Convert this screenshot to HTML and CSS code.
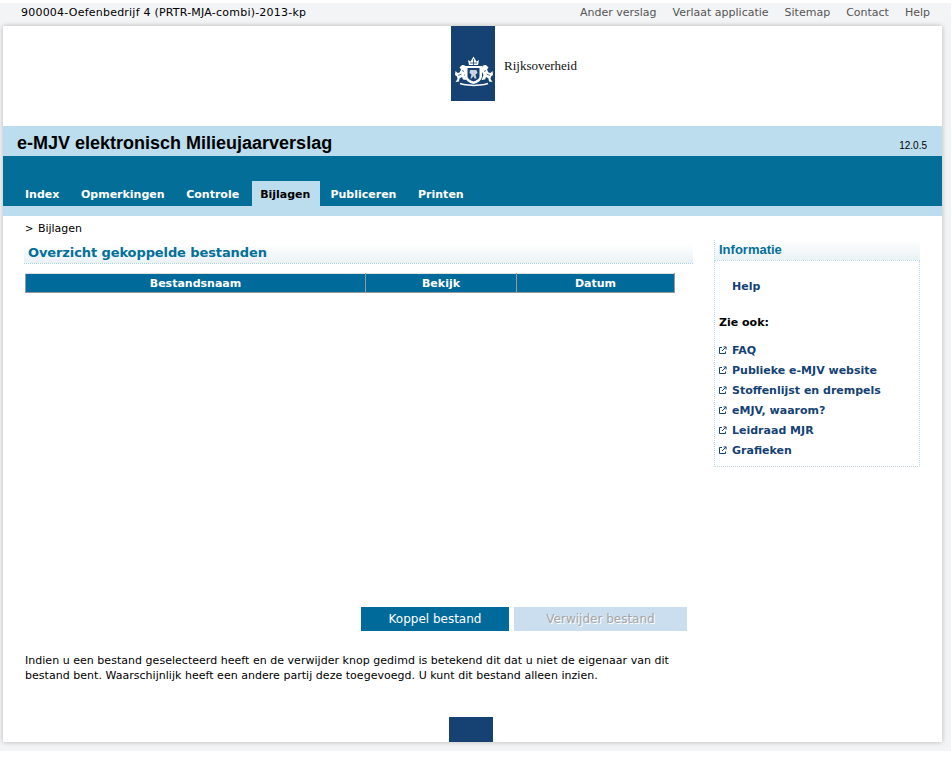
FILE: index.html
```html
<!DOCTYPE html>
<html lang="en">
<head>
  <meta charset="UTF-8">
  <meta name="viewport" content="width=device-width, initial-scale=1.0">
  <title>e-MJV elektronisch Milieujaarverslag</title>
  <link rel="stylesheet" href="styles.css">
</head>
<body>
  <div class="shell">
    <div class="topbar">
      <span class="company">900004-Oefenbedrijf 4 (PRTR-MJA-combi)-2013-kp</span>
      <ul class="toplinks">
        <li>Ander verslag</li>
        <li>Verlaat applicatie</li>
        <li>Sitemap</li>
        <li>Contact</li>
        <li>Help</li>
      </ul>
    </div>

    <div class="page">
      <div class="brand">
        <div class="logo">
          <svg class="crest" viewBox="0 0 44 45" width="44" height="45" aria-hidden="true">
            <!-- crown -->
            <path fill="#fff" d="M18 15 17 10 19.500 11.500 22.500 6.500 25.500 11.500 28 10 27 15Z"/>
            <path fill="none" stroke="#154273" stroke-width=".8" d="M19 13H26M22.500 9V15"/>
            <!-- shield with mantle -->
            <path fill="#fff" d="M14 16H31V26C31 30 27 33 22.500 34 18 33 14 30 14 26Z"/>
            <path fill="#154273" d="M16.500 18H28.500V26C28.500 29 25.500 30.500 22.500 31.500 19.500 30.500 16.500 29 16.500 26Z"/>
            <path fill="#c9d4e2" d="M19 20H25.500L26.500 23 24.500 24.500 25.500 28.500H23.500L22.500 26 20.500 28.500H19.500L20.500 24.500 18.500 23Z"/>
            <!-- lions -->
            <path fill="#fff" d="M10.500 15.500C12.500 14.500 15 15.500 15 18V22L13.500 25 15.500 30 12 29.500 11 27 8.500 28.500 8 31.500 4.500 32 6.500 29 6 26.500 4 25 4.500 21 6.500 23 8.500 22.500 10 19.500 8.500 17.500Z"/>
            <path fill="none" stroke="#154273" stroke-width=".7" d="M7 25.500 10.500 24M11 20.500 13 21.500"/>
            <g transform="matrix(-1 0 0 1 46 0)">
              <path fill="#fff" d="M10.500 15.500C12.500 14.500 15 15.500 15 18V22L13.500 25 15.500 30 12 29.500 11 27 8.500 28.500 8 31.500 4.500 32 6.500 29 6 26.500 4 25 4.500 21 6.500 23 8.500 22.500 10 19.500 8.500 17.500Z"/>
              <path fill="none" stroke="#154273" stroke-width=".7" d="M7 25.500 10.500 24M11 20.500 13 21.500"/>
            </g>
            <!-- motto ribbon -->
            <path fill="none" stroke="#fff" stroke-width="1.600" d="M9 33.500C14 35.500 18 34.500 23 35.500 28 34.500 32 35.500 37 33.500"/>
          </svg>
        </div>
        <span class="wordmark">Rijksoverheid</span>
      </div>

      <div class="titleband">
        <h1>e-MJV elektronisch Milieujaarverslag</h1>
        <span class="version">12.0.5</span>
      </div>

      <nav class="mainnav">
        <a class="tab">Index</a>
        <a class="tab">Opmerkingen</a>
        <a class="tab">Controle</a>
        <a class="tab active">Bijlagen</a>
        <a class="tab">Publiceren</a>
        <a class="tab">Printen</a>
      </nav>
      <div class="navstrip"></div>

      <div class="content">
        <main class="main">
          <p class="crumb"><span class="crumb-arrow">&gt;</span> Bijlagen</p>
          <h2 class="main-title">Overzicht gekoppelde bestanden</h2>
          <table class="files">
            <thead>
              <tr>
                <th class="col-name">Bestandsnaam</th>
                <th class="col-view">Bekijk</th>
                <th class="col-date">Datum</th>
              </tr>
            </thead>
          </table>
          <div class="actions">
            <button class="btn">Koppel bestand</button>
            <button class="btn btn-disabled" disabled>Verwijder bestand</button>
          </div>
          <p class="note">Indien u een bestand geselecteerd heeft en de verwijder knop gedimd is betekend dit dat u niet de eigenaar van dit bestand bent. Waarschijnlijk heeft een andere partij deze toegevoegd. U kunt dit bestand alleen inzien.</p>
        </main>

        <aside class="side">
          <h3 class="side-title">Informatie</h3>
          <div class="side-box">
            <a class="help-link">Help</a>
            <p class="see-also">Zie ook:</p>
            <ul class="side-links">
              <li><svg class="ext" viewBox="0 0 8 8" width="8" height="8"><path d="M3 1.500H.5V7.500H6.500V5.500M3 5 6.800 1.200M4.500 .9H7.100V3.500" fill="none" stroke="#154273"/></svg>FAQ</li>
              <li><svg class="ext" viewBox="0 0 8 8" width="8" height="8"><path d="M3 1.500H.5V7.500H6.500V5.500M3 5 6.800 1.200M4.500 .9H7.100V3.500" fill="none" stroke="#154273"/></svg>Publieke e-MJV website</li>
              <li><svg class="ext" viewBox="0 0 8 8" width="8" height="8"><path d="M3 1.500H.5V7.500H6.500V5.500M3 5 6.800 1.200M4.500 .9H7.100V3.500" fill="none" stroke="#154273"/></svg>Stoffenlijst en drempels</li>
              <li><svg class="ext" viewBox="0 0 8 8" width="8" height="8"><path d="M3 1.500H.5V7.500H6.500V5.500M3 5 6.800 1.200M4.500 .9H7.100V3.500" fill="none" stroke="#154273"/></svg>eMJV, waarom?</li>
              <li><svg class="ext" viewBox="0 0 8 8" width="8" height="8"><path d="M3 1.500H.5V7.500H6.500V5.500M3 5 6.800 1.200M4.500 .9H7.100V3.500" fill="none" stroke="#154273"/></svg>Leidraad MJR</li>
              <li><svg class="ext" viewBox="0 0 8 8" width="8" height="8"><path d="M3 1.500H.5V7.500H6.500V5.500M3 5 6.800 1.200M4.500 .9H7.100V3.500" fill="none" stroke="#154273"/></svg>Grafieken</li>
            </ul>
          </div>
        </aside>
      </div>

      <div class="footer">
        <div class="footer-block"></div>
      </div>
    </div>
  </div>
</body>
</html>
```

FILE: styles.css
```css
/* Reset default styles */
* {
  margin: 0;
  padding: 0;
  box-sizing: border-box;
}

body {
  font-family: 'DejaVu Sans', Verdana, sans-serif;
  font-size: 11px;
  background-color: #fff;
  color: #000;
  padding-top: 3px;
}

.shell {
  background-color: #f3f4f6;
  width: 951px;
  height: 748px;
  padding: 0 9px 0 3px;
}

.topbar {
  height: 23px;
  display: flex;
  justify-content: space-between;
  align-items: center;
  padding: 0 13px 4px 18px;
  margin-right: -9px;
  font-size: 11px;
}

.company {
  letter-spacing: 0.22px;
}

.toplinks {
  display: flex;
  gap: 16px;
  list-style: none;
  color: #555;
  padding-right: 8px;
}

.page {
  width: 939px;
  height: 716px;
  background-color: #fff;
  box-shadow: 0 0 5px rgba(0, 0, 0, 0.25);
  display: flex;
  flex-direction: column;
}

.brand {
  height: 100px;
  display: flex;
  padding-left: 448px;
}

.logo {
  width: 44px;
  height: 75px;
  background-color: #154273;
  padding-top: 24px;
}

.crest {
  display: block;
}

.wordmark {
  font-family: 'Liberation Serif', serif;
  font-size: 13px;
  margin: 32px 0 0 9px;
  color: #111;
}

.titleband {
  height: 30px;
  background-color: #bcdded;
  display: flex;
  justify-content: space-between;
  padding: 6px 15px 0 14px;
}

.titleband h1 {
  font-family: 'Liberation Sans', Arial, sans-serif;
  font-size: 18px;
  font-weight: bold;
  line-height: 22px;
}

.version {
  font-family: 'Liberation Sans', Arial, sans-serif;
  font-size: 10px;
  margin-top: 8px;
}

.mainnav {
  height: 50px;
  background-color: #036f99;
  display: flex;
  align-items: flex-end;
  padding-left: 12px;
}

.tab {
  height: 25px;
  padding: 0 10px;
  line-height: 27px;
  font-weight: bold;
  color: #fff;
  margin-right: 1.6px;
}

.tab.active {
  background-color: #bcdded;
  color: #000;
  padding-left: 8px;
  margin-left: 1.4px;
  margin-right: 0;
}

.navstrip {
  height: 10px;
  background-color: #bcdded;
}

.content {
  flex: 1;
  display: flex;
}

.main {
  width: 690px;
  padding: 6px 0 0 21px;
}

.crumb {
  height: 22px;
  line-height: 13px;
  padding-left: 1px;
}

.crumb-arrow {
  font-size: 10px;
  margin-right: 1px;
}

.main-title {
  width: 669px;
  height: 20px;
  font-size: 13px;
  font-weight: bold;
  line-height: 17px;
  letter-spacing: -0.1px;
  padding-left: 4px;
  color: #036f99;
  background: linear-gradient(#fff, #e9f1f5);
  border-bottom: 1px dotted #a6d3ea;
}

.files {
  width: 650px;
  margin: 9px 0 0 1px;
  border-collapse: collapse;
  table-layout: fixed;
}

.files th {
  height: 19px;
  background-color: #006a9b;
  color: #fff;
  font-size: 11px;
  font-weight: bold;
  border-left: 1px solid #999;
  border-right: 1px solid #999;
  border-top: 1px solid #e0e0e0;
  border-bottom: 1px solid #999;
}

.col-name {
  width: 340px;
}

.col-view {
  width: 151px;
}

.actions {
  display: flex;
  gap: 5px;
  margin: 314px 0 0 337px;
}

.btn {
  height: 24px;
  width: 148px;
  border: none;
  background-color: #006a9b;
  color: #fff;
  font-family: 'DejaVu Sans', Verdana, sans-serif;
  font-size: 12px;
}

.btn-disabled {
  width: 173px;
  background-color: #cbdef0;
  color: #a6a6a6;
  text-shadow: 1px 1px 0 #fff;
}

.note {
  width: 680px;
  margin-top: 22px;
  padding-left: 1px;
  line-height: 15px;
  letter-spacing: 0.03px;
}

.side {
  width: 206px;
  margin: 24px 0 0 21px;
}

.side-title {
  height: 21px;
  font-family: 'Liberation Sans', Arial, sans-serif;
  font-size: 13px;
  font-weight: bold;
  line-height: 19px;
  padding-left: 4px;
  color: #036f99;
  background: linear-gradient(#fff, #e9f1f5);
  border-left: 1px dotted #b9dcee;
  border-bottom: 1px dotted #b9dcee;
}

.side-box {
  height: 206px;
  padding: 19px 4px 0 4px;
  border: 1px dotted #b9dcee;
  border-top: none;
  border-bottom-color: #c5d5dd;
}

.help-link {
  display: block;
  padding-left: 13px;
  font-weight: bold;
  color: #154273;
}

.see-also {
  margin-top: 23px;
  font-weight: bold;
}

.side-links {
  list-style: none;
  margin-top: 12px;
}

.side-links li {
  height: 20px;
  line-height: 20px;
  font-weight: bold;
  color: #154273;
  display: flex;
  align-items: center;
}

.ext {
  margin: 0 5px 2px 0;
  flex-shrink: 0;
}

.footer {
  height: 25px;
  padding-left: 446px;
}

.footer-block {
  width: 44px;
  height: 25px;
  background-color: #154273;
}
```
